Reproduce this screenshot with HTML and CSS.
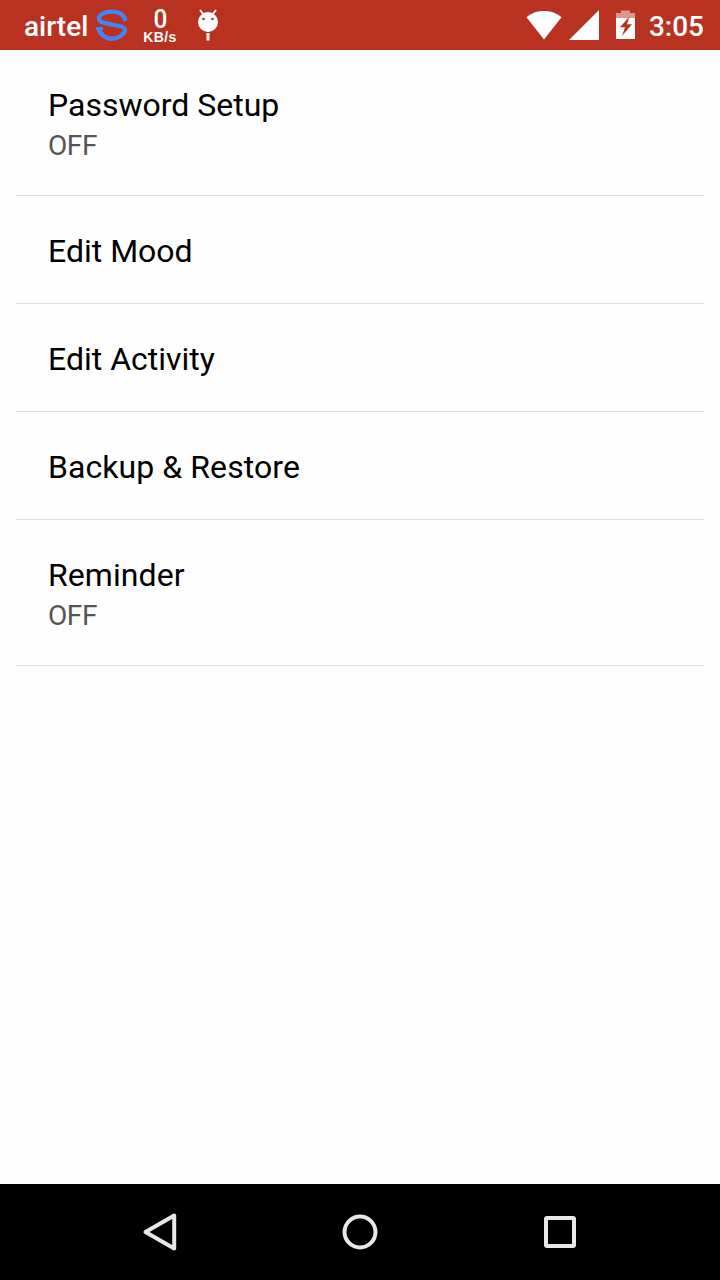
FILE: index.html
```html
<!DOCTYPE html>
<html lang="en">
<head>
<meta charset="utf-8">
<title>Settings</title>
<link rel="stylesheet" href="styles.css">
</head>
<body>
<div class="screen">
  <header class="status">
    <span class="carrier">airtel</span>
    <svg class="sync" width="32" height="34" viewBox="0 0 32 34" fill="none" stroke="#4285f4" stroke-width="4.300" stroke-linejoin="round">
      <path d="M29.300 13C28.500 6.500 23 3.600 16 3.600C8.500 3.600 2.900 6.500 2.900 10.500C2.900 13.500 5.500 14.500 9 15.200L23 18C27 18.800 29.300 20 29 22.500C28.500 26 22 30.800 16 30.800C10 30.800 3.300 26.500 2.800 20"/>
      <path d="M0 20.500H7" stroke-width="3"/>
    </svg>
    <div class="speed"><span class="speed-value">0</span><span class="speed-unit">KB/s</span></div>
    <svg class="robot" width="22" height="34" viewBox="0 0 22 34">
      <path d="M3 3L7 8M19 3L15 8" stroke="#fff" stroke-width="2"/>
      <circle cx="11" cy="15" r="10" fill="#fff"/>
      <circle cx="6.500" cy="12" r="1.300" fill="#b93221"/>
      <circle cx="15.500" cy="12" r="1.300" fill="#b93221"/>
      <path d="M9.500 26H12.500V33.500H9.500Z" fill="#fff"/>
    </svg>
    <span class="spacer"></span>
    <svg class="wifi" width="36" height="30" viewBox="0 0 36 30"><path d="M18 29.500L.5 7.300C5.500 3 11 1 18 1S30.500 3 35.500 7.300Z" fill="#fff"/></svg>
    <svg class="signal" width="30" height="30" viewBox="0 0 30 30"><path d="M0 30L30 0V30Z" fill="#fff"/></svg>
    <svg class="battery" width="19" height="30" viewBox="0 0 19 30">
      <path d="M0 8V3H5V.5H14V3H19V8Z" fill="#dc988f"/>
      <path d="M0 8H19V29H0Z" fill="#fff"/>
      <path d="M13.500 6.500L4 17.200H9L6 26L16 14.300H11Z" fill="#b93221"/>
    </svg>
    <span class="clock">3:05</span>
  </header>
  <main class="list">
    <div class="row"><div class="title">Password Setup</div><div class="summary">OFF</div></div>
    <div class="row"><div class="title">Edit Mood</div></div>
    <div class="row"><div class="title">Edit Activity</div></div>
    <div class="row"><div class="title title-wide">Backup &amp; Restore</div></div>
    <div class="row"><div class="title title-wide">Reminder</div><div class="summary">OFF</div></div>
  </main>
  <nav class="navbar">
    <svg width="40" height="40" viewBox="0 0 40 40"><path d="M5.500 20L34.200 3.500V36.500Z"/></svg>
    <svg width="40" height="40" viewBox="0 0 40 40"><circle cx="20" cy="20" r="15.500"/></svg>
    <svg width="40" height="40" viewBox="0 0 40 40"><rect x="6" y="6" width="28" height="28" rx="1"/></svg>
  </nav>
</div>
</body>
</html>
```
FILE: styles.css
```css
body {
  margin: 0;
  font-family: Roboto, "Liberation Sans", sans-serif;
}
.screen {
  display: flex;
  flex-direction: column;
  width: 720px;
  height: 1280px;
  background: #fefefe;
}
.status {
  display: flex;
  align-items: flex-start;
  box-sizing: border-box;
  height: 50px;
  padding: 0 16px 0 24px;
  background: #b93221;
  color: #fff;
}
.carrier,
.clock {
  font-size: 28px;
  font-weight: 500;
  line-height: 34px;
  margin-top: 10px;
}
.carrier { width: 64px; margin-right: 8px; white-space: nowrap; }
.sync { margin-top: 8px; }
.speed {
  display: flex;
  flex-direction: column;
  align-items: center;
  width: 34px;
  margin: 8px 20px 0 15px;
}
.speed-value {
  font-size: 26px;
  font-weight: 500;
  line-height: 22px;
  transform: scaleX(0.94);
}
.speed-unit {
  font: bold 14px/14px "Liberation Sans", sans-serif;
  letter-spacing: 0.4px;
}
.robot { margin-top: 7px; }
.spacer { flex: 1; }
.wifi { margin: 10px 7px 0 0; }
.signal { margin: 10px 17px 0 0; }
.battery { margin: 10px 14px 0 0; }
.list {
  flex: 1;
  padding: 0 16px;
}
.row {
  padding: 36px 32px 33px;
  border-bottom: 1px solid #dedede;
}
.title {
  font-size: 32px;
  line-height: 38px;
  color: #000;
}
.title-wide { letter-spacing: 0.07px; }
.summary {
  padding-top: 5px;
  font-size: 28px;
  line-height: 33px;
  letter-spacing: -0.4px;
  color: #555;
}
.navbar {
  display: flex;
  align-items: center;
  justify-content: center;
  gap: 160px;
  height: 96px;
  background: #000;
}
.navbar svg {
  fill: none;
  stroke: #e8e8e8;
  stroke-width: 4;
  stroke-linejoin: round;
}
```
